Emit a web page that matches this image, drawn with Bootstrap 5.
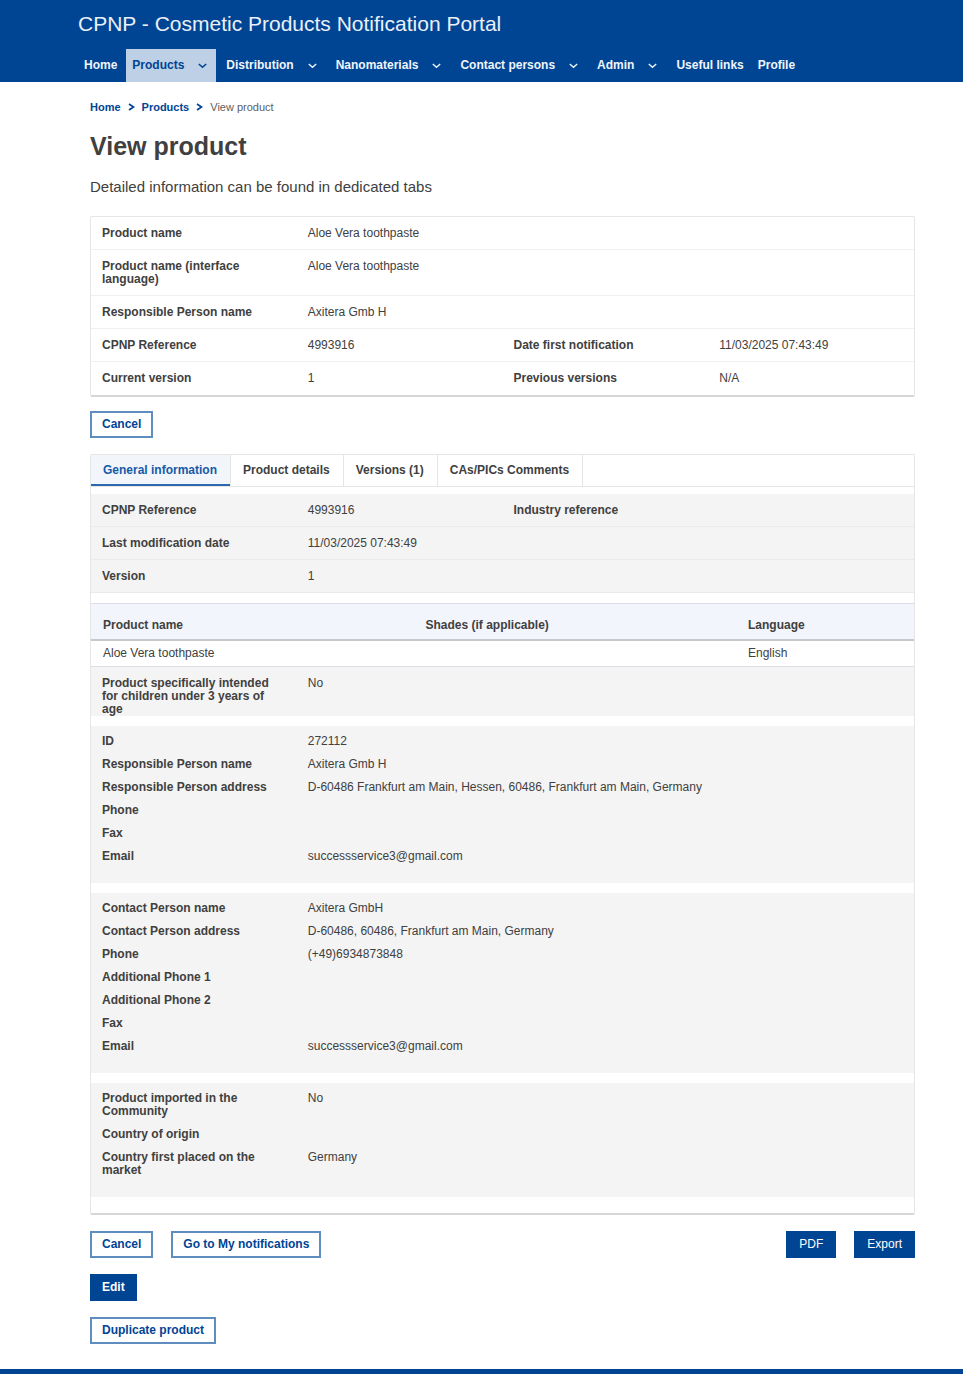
<!DOCTYPE html>
<html lang="en">
<head>
<meta charset="utf-8">
<meta name="viewport" content="width=device-width, initial-scale=1">
<title>CPNP - View product</title>
<link href="https://cdn.jsdelivr.net/npm/bootstrap@5.3.0/dist/css/bootstrap.min.css" rel="stylesheet">
<style>
  :root { --eu-blue: #004494; --eu-line: #e6e6e6; }
  body { font-family: "Liberation Sans", Arial, sans-serif; font-size: 12px; line-height: 13px; color: #404040; background: #fff; }
  .site-head { background: var(--eu-blue); padding-left: 78px; }
  .site-title { font-size: 21px; line-height: 24px; padding: 12px 0 13px; color: #e9f0f8; }
  .site-nav .nav-link { display: flex; align-items: center; gap: 14px; height: 33px; padding: 0 8px 0 6px; color: #f0f5fb; font-weight: 700; }
  .site-nav .has-menu { margin-right: 4px; padding-right: 9px; }
  .site-nav .has-menu.active { background: #bed0e5; color: var(--eu-blue); margin-left: 1px; }
  .page-main { padding: 18px 48px 25px 90px; }
  .crumbs { font-size: 11px; line-height: 14px; gap: 7px; }
  .crumbs a { color: var(--eu-blue); font-weight: 700; text-decoration: none; }
  .crumbs span { color: #606060; }
  h1 { font-size: 25px; line-height: 28px; font-weight: 700; margin: 18px 0 0; }
  .intro { font-size: 15px; line-height: 18px; margin: 18px 0 20px; }
  .panel { border: 1px solid var(--eu-line); border-bottom: 2px solid #d6d6d6; border-radius: 2px; }
  .line { padding: 10px 0 9px; border-bottom: 1px solid #f0f0f0; min-height: 33px; }
  .line:last-child { border-bottom-color: transparent; }
  .line > div, .pair > div, .wide-line > div { padding: 0 12px 0 11px; }
  .shade { background: #f4f4f4; }
  .shade .line { border-bottom-color: #eaeaea; }
  .group { padding: 9px 0 10px; margin-top: 10px; }
  .pair { padding-bottom: 10px; min-height: 23px; }
  .wide-line { padding: 10px 0 0; }
  .btn-eu { font-size: 12px; line-height: 13px; font-weight: 700; padding: 5px 10px; border: 2px solid #5f8dc0; border-radius: 0; color: var(--eu-blue); background: #fff; height: 27px; }
  .btn-eu:hover { background: #f2f5f9; color: var(--eu-blue); border-color: var(--eu-blue); }
  .btn-eu.solid { background: var(--eu-blue); border-color: var(--eu-blue); color: #fff; }
  .btn-eu.plain { font-weight: 400; padding: 5px 11px; }
  .btn-set { gap: 18px; }
  .top-actions { margin: 14px 0 16px; }
  .tabs-bar { border-bottom: 1px solid var(--eu-line); margin-bottom: 7px; }
  .tabs-bar .nav-link { background: transparent; border: 0; border-right: 1px solid var(--eu-line); border-radius: 0; padding: 0 13px 0 12px; height: 31px; font-weight: 700; color: #404040; }
  .tabs-bar .nav-link.active { background: #f2f5f9; color: #155aa8; box-shadow: inset 0 -2px #2b68ad; }
  .names { table-layout: fixed; margin: 10px 0 0; border: solid #dcdfe6; border-width: 1px 0; color: #404040; font-size: 12px; }
  .names th { background: #f2f5fb; height: 36px; padding: 8px 12px 0; vertical-align: middle; }
  .names thead { border-bottom: 2px solid #c6c8cc; }
  .names td { height: 27px; padding: 0 12px; vertical-align: middle; }
  .names .lang-col { width: 178px; }
  .site-foot { background: var(--eu-blue); height: 6px; }
</style>
</head>
<body>
<header class="site-head">
  <div class="site-title">CPNP - Cosmetic Products Notification Portal</div>
  <nav class="nav site-nav flex-nowrap" aria-label="Main">
    <a class="nav-link" href="#">Home</a>
    <a class="nav-link has-menu active" href="#">Products <svg width="9" height="6" viewBox="0 0 9 6" fill="none" stroke="currentColor" stroke-width="1.6"><path d="M.8 1L4.500 4.300 8.200 1"/></svg></a>
    <a class="nav-link has-menu" href="#">Distribution <svg width="9" height="6" viewBox="0 0 9 6" fill="none" stroke="currentColor" stroke-width="1.4"><path d="M.8 1L4.500 4.300 8.200 1"/></svg></a>
    <a class="nav-link has-menu" href="#">Nanomaterials <svg width="9" height="6" viewBox="0 0 9 6" fill="none" stroke="currentColor" stroke-width="1.4"><path d="M.8 1L4.500 4.300 8.200 1"/></svg></a>
    <a class="nav-link has-menu" href="#">Contact persons <svg width="9" height="6" viewBox="0 0 9 6" fill="none" stroke="currentColor" stroke-width="1.4"><path d="M.8 1L4.500 4.300 8.200 1"/></svg></a>
    <a class="nav-link has-menu" href="#">Admin <svg width="9" height="6" viewBox="0 0 9 6" fill="none" stroke="currentColor" stroke-width="1.4"><path d="M.8 1L4.500 4.300 8.200 1"/></svg></a>
    <a class="nav-link" href="#">Useful links</a>
    <a class="nav-link" href="#">Profile</a>
  </nav>
</header>

<main class="page-main">
  <nav class="crumbs d-flex align-items-center" aria-label="Breadcrumb">
    <a href="#">Home</a>
    <svg width="7" height="8" viewBox="0 0 7 8" fill="none" stroke="#004494" stroke-width="1.7"><path d="M1 1L5.500 4 1 7"/></svg>
    <a href="#">Products</a>
    <svg width="7" height="8" viewBox="0 0 7 8" fill="none" stroke="#004494" stroke-width="1.7"><path d="M1 1L5.500 4 1 7"/></svg>
    <span>View product</span>
  </nav>
  <h1>View product</h1>
  <p class="intro">Detailed information can be found in dedicated tabs</p>

  <section class="panel">
    <div class="row g-0 line"><div class="col-3 fw-bold">Product name</div><div class="col-9">Aloe Vera toothpaste</div></div>
    <div class="row g-0 line"><div class="col-3 fw-bold">Product name (interface language)</div><div class="col-9">Aloe Vera toothpaste</div></div>
    <div class="row g-0 line"><div class="col-3 fw-bold">Responsible Person name</div><div class="col-9">Axitera Gmb H</div></div>
    <div class="row g-0 line"><div class="col-3 fw-bold">CPNP Reference</div><div class="col-3">4993916</div><div class="col-3 fw-bold">Date first notification</div><div class="col-3">11/03/2025 07:43:49</div></div>
    <div class="row g-0 line"><div class="col-3 fw-bold">Current version</div><div class="col-3">1</div><div class="col-3 fw-bold">Previous versions</div><div class="col-3">N/A</div></div>
  </section>

  <div class="d-flex top-actions"><button type="button" class="btn btn-eu">Cancel</button></div>

  <section class="panel">
    <div class="nav tabs-bar" role="tablist">
      <button type="button" class="nav-link active" role="tab" aria-selected="true">General information</button>
      <button type="button" class="nav-link" role="tab">Product details</button>
      <button type="button" class="nav-link" role="tab">Versions (1)</button>
      <button type="button" class="nav-link" role="tab">CAs/PICs Comments</button>
    </div>

    <div class="shade">
      <div class="row g-0 line"><div class="col-3 fw-bold">CPNP Reference</div><div class="col-3">4993916</div><div class="col-3 fw-bold">Industry reference</div></div>
      <div class="row g-0 line"><div class="col-3 fw-bold">Last modification date</div><div class="col-9">11/03/2025 07:43:49</div></div>
      <div class="row g-0 line"><div class="col-3 fw-bold">Version</div><div class="col-9">1</div></div>
    </div>

    <table class="names w-100">
      <thead><tr><th>Product name</th><th>Shades (if applicable)</th><th class="lang-col">Language</th></tr></thead>
      <tbody><tr><td>Aloe Vera toothpaste</td><td></td><td>English</td></tr></tbody>
    </table>

    <div class="shade row g-0 wide-line"><div class="col-3 fw-bold">Product specifically intended for children under 3 years of age</div><div class="col-9">No</div></div>

    <div class="shade group">
      <div class="row g-0 pair"><div class="col-3 fw-bold">ID</div><div class="col-9">272112</div></div>
      <div class="row g-0 pair"><div class="col-3 fw-bold">Responsible Person name</div><div class="col-9">Axitera Gmb H</div></div>
      <div class="row g-0 pair"><div class="col-3 fw-bold">Responsible Person address</div><div class="col-9">D-60486 Frankfurt am Main, Hessen, 60486, Frankfurt am Main, Germany</div></div>
      <div class="row g-0 pair"><div class="col-3 fw-bold">Phone</div></div>
      <div class="row g-0 pair"><div class="col-3 fw-bold">Fax</div></div>
      <div class="row g-0 pair"><div class="col-3 fw-bold">Email</div><div class="col-9">successservice3@gmail.com</div></div>
    </div>

    <div class="shade group">
      <div class="row g-0 pair"><div class="col-3 fw-bold">Contact Person name</div><div class="col-9">Axitera GmbH</div></div>
      <div class="row g-0 pair"><div class="col-3 fw-bold">Contact Person address</div><div class="col-9">D-60486, 60486, Frankfurt am Main, Germany</div></div>
      <div class="row g-0 pair"><div class="col-3 fw-bold">Phone</div><div class="col-9">(+49)6934873848</div></div>
      <div class="row g-0 pair"><div class="col-3 fw-bold">Additional Phone 1</div></div>
      <div class="row g-0 pair"><div class="col-3 fw-bold">Additional Phone 2</div></div>
      <div class="row g-0 pair"><div class="col-3 fw-bold">Fax</div></div>
      <div class="row g-0 pair"><div class="col-3 fw-bold">Email</div><div class="col-9">successservice3@gmail.com</div></div>
    </div>

    <div class="shade group mb-3">
      <div class="row g-0 pair"><div class="col-3 fw-bold">Product imported in the Community</div><div class="col-9">No</div></div>
      <div class="row g-0 pair"><div class="col-3 fw-bold">Country of origin</div></div>
      <div class="row g-0 pair"><div class="col-3 fw-bold">Country first placed on the market</div><div class="col-9">Germany</div></div>
    </div>
  </section>

  <div class="d-flex flex-column gap-3 mt-3">
    <div class="d-flex justify-content-between">
      <div class="d-flex btn-set"><button type="button" class="btn btn-eu">Cancel</button><button type="button" class="btn btn-eu">Go to My notifications</button></div>
      <div class="d-flex btn-set"><button type="button" class="btn btn-eu solid plain">PDF</button><button type="button" class="btn btn-eu solid plain">Export</button></div>
    </div>
    <div class="d-flex"><button type="button" class="btn btn-eu solid">Edit</button></div>
    <div class="d-flex"><button type="button" class="btn btn-eu">Duplicate product</button></div>
  </div>
</main>
<footer class="site-foot"></footer>
<script src="https://cdn.jsdelivr.net/npm/bootstrap@5.3.0/dist/js/bootstrap.bundle.min.js"></script>
</body>
</html>
